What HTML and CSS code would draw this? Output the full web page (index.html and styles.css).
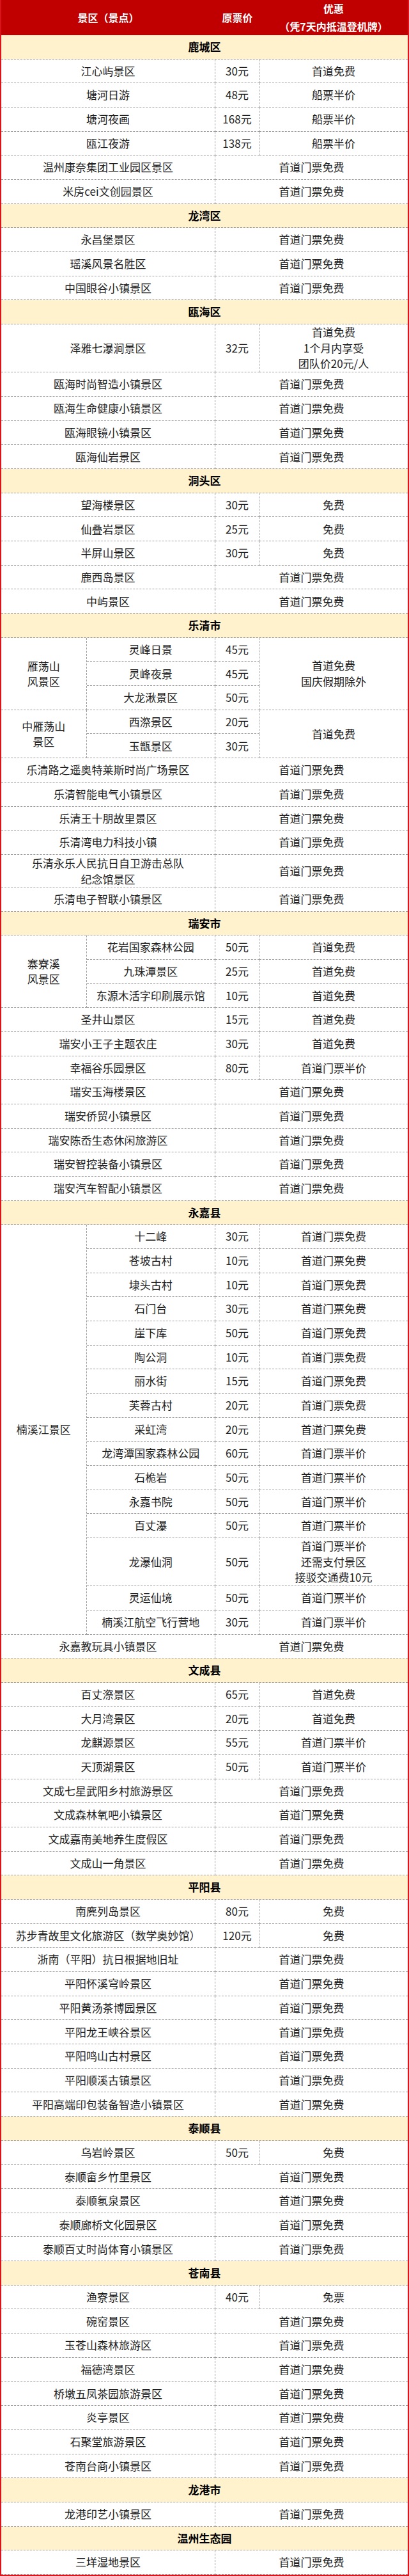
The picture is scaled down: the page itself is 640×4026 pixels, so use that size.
FILE: index.html
```html
<!DOCTYPE html>
<html lang="zh-CN">
<head>
<meta charset="utf-8">
<title>温州景区优惠</title>
<link rel="stylesheet" href="styles.css">
</head>
<body>
<div class="sheet">
  <div class="head">
    <div class="hc hn">景区（景点）</div>
    <div class="hc hp">原票价</div>
    <div class="hc hd">优惠<br>（凭7天内抵温登机牌）</div>
  </div>

  <div class="region">
    <div class="c t">鹿城区</div>
    <div class="c n">江心屿景区</div><div class="c p">30元</div><div class="c d">首道免费</div>
    <div class="c n">塘河日游</div><div class="c p">48元</div><div class="c d">船票半价</div>
    <div class="c n">塘河夜画</div><div class="c p">168元</div><div class="c d">船票半价</div>
    <div class="c n">瓯江夜游</div><div class="c p">138元</div><div class="c d">船票半价</div>
    <div class="c n">温州康奈集团工业园区景区</div><div class="c w">首道门票免费</div>
    <div class="c n">米房cei文创园景区</div><div class="c w">首道门票免费</div>
  </div>

  <div class="region">
    <div class="c t">龙湾区</div>
    <div class="c n">永昌堡景区</div><div class="c w">首道门票免费</div>
    <div class="c n">瑶溪风景名胜区</div><div class="c w">首道门票免费</div>
    <div class="c n">中国眼谷小镇景区</div><div class="c w">首道门票免费</div>
  </div>

  <div class="region">
    <div class="c t">瓯海区</div>
    <div class="c n r2">泽雅七瀑涧景区</div><div class="c p r2">32元</div><div class="c d r2">首道免费<br>1个月内享受<br>团队价20元/人</div>
    <div class="c n">瓯海时尚智造小镇景区</div><div class="c w">首道门票免费</div>
    <div class="c n">瓯海生命健康小镇景区</div><div class="c w">首道门票免费</div>
    <div class="c n">瓯海眼镜小镇景区</div><div class="c w">首道门票免费</div>
    <div class="c n">瓯海仙岩景区</div><div class="c w">首道门票免费</div>
  </div>

  <div class="region">
    <div class="c t">洞头区</div>
    <div class="c n">望海楼景区</div><div class="c p">30元</div><div class="c d">免费</div>
    <div class="c n">仙叠岩景区</div><div class="c p">25元</div><div class="c d">免费</div>
    <div class="c n">半屏山景区</div><div class="c p">30元</div><div class="c d">免费</div>
    <div class="c n">鹿西岛景区</div><div class="c w">首道门票免费</div>
    <div class="c n">中屿景区</div><div class="c w">首道门票免费</div>
  </div>

  <div class="region">
    <div class="c t">乐清市</div>
    <div class="c g r3">雁荡山<br>风景区</div><div class="c s">灵峰日景</div><div class="c p">45元</div><div class="c d r3">首道免费<br>国庆假期除外</div>
    <div class="c s">灵峰夜景</div><div class="c p">45元</div>
    <div class="c s">大龙湫景区</div><div class="c p">50元</div>
    <div class="c g r2">中雁荡山<br>景区</div><div class="c s">西漈景区</div><div class="c p">20元</div><div class="c d r2">首道免费</div>
    <div class="c s">玉甑景区</div><div class="c p">30元</div>
    <div class="c n">乐清路之遥奥特莱斯时尚广场景区</div><div class="c w">首道门票免费</div>
    <div class="c n">乐清智能电气小镇景区</div><div class="c w">首道门票免费</div>
    <div class="c n">乐清王十朋故里景区</div><div class="c w">首道门票免费</div>
    <div class="c n">乐清湾电力科技小镇</div><div class="c w">首道门票免费</div>
    <div class="c n tall">乐清永乐人民抗日自卫游击总队<br>纪念馆景区</div><div class="c w">首道门票免费</div>
    <div class="c n">乐清电子智联小镇景区</div><div class="c w">首道门票免费</div>
  </div>

  <div class="region">
    <div class="c t">瑞安市</div>
    <div class="c g r3">寨寮溪<br>风景区</div><div class="c s">花岩国家森林公园</div><div class="c p">50元</div><div class="c d">首道免费</div>
    <div class="c s">九珠潭景区</div><div class="c p">25元</div><div class="c d">首道免费</div>
    <div class="c s">东源木活字印刷展示馆</div><div class="c p">10元</div><div class="c d">首道免费</div>
    <div class="c n">圣井山景区</div><div class="c p">15元</div><div class="c d">首道免费</div>
    <div class="c n">瑞安小王子主题农庄</div><div class="c p">30元</div><div class="c d">首道免费</div>
    <div class="c n">幸福谷乐园景区</div><div class="c p">80元</div><div class="c d">首道门票半价</div>
    <div class="c n">瑞安玉海楼景区</div><div class="c w">首道门票免费</div>
    <div class="c n">瑞安侨贸小镇景区</div><div class="c w">首道门票免费</div>
    <div class="c n">瑞安陈岙生态休闲旅游区</div><div class="c w">首道门票免费</div>
    <div class="c n">瑞安智控装备小镇景区</div><div class="c w">首道门票免费</div>
    <div class="c n">瑞安汽车智配小镇景区</div><div class="c w">首道门票免费</div>
  </div>

  <div class="region">
    <div class="c t">永嘉县</div>
    <div class="c g r17">楠溪江景区</div><div class="c s">十二峰</div><div class="c p">30元</div><div class="c d">首道门票免费</div>
    <div class="c s">苍坡古村</div><div class="c p">10元</div><div class="c d">首道门票免费</div>
    <div class="c s">埭头古村</div><div class="c p">10元</div><div class="c d">首道门票免费</div>
    <div class="c s">石门台</div><div class="c p">30元</div><div class="c d">首道门票免费</div>
    <div class="c s">崖下库</div><div class="c p">50元</div><div class="c d">首道门票免费</div>
    <div class="c s">陶公洞</div><div class="c p">10元</div><div class="c d">首道门票免费</div>
    <div class="c s">丽水街</div><div class="c p">15元</div><div class="c d">首道门票免费</div>
    <div class="c s">芙蓉古村</div><div class="c p">20元</div><div class="c d">首道门票免费</div>
    <div class="c s">采虹湾</div><div class="c p">20元</div><div class="c d">首道门票免费</div>
    <div class="c s">龙湾潭国家森林公园</div><div class="c p">60元</div><div class="c d">首道门票半价</div>
    <div class="c s">石桅岩</div><div class="c p">50元</div><div class="c d">首道门票半价</div>
    <div class="c s">永嘉书院</div><div class="c p">50元</div><div class="c d">首道门票半价</div>
    <div class="c s">百丈瀑</div><div class="c p">50元</div><div class="c d">首道门票半价</div>
    <div class="c s r2">龙瀑仙洞</div><div class="c p r2">50元</div><div class="c d r2">首道门票半价<br>还需支付景区<br>接驳交通费10元</div>
    <div class="c s">灵运仙境</div><div class="c p">50元</div><div class="c d">首道门票半价</div>
    <div class="c s">楠溪江航空飞行营地</div><div class="c p">30元</div><div class="c d">首道门票半价</div>
    <div class="c n">永嘉教玩具小镇景区</div><div class="c w">首道门票免费</div>
  </div>

  <div class="region">
    <div class="c t">文成县</div>
    <div class="c n">百丈漈景区</div><div class="c p">65元</div><div class="c d">首道免费</div>
    <div class="c n">大月湾景区</div><div class="c p">20元</div><div class="c d">首道免费</div>
    <div class="c n">龙麒源景区</div><div class="c p">55元</div><div class="c d">首道门票半价</div>
    <div class="c n">天顶湖景区</div><div class="c p">50元</div><div class="c d">首道门票半价</div>
    <div class="c n">文成七星武阳乡村旅游景区</div><div class="c w">首道门票免费</div>
    <div class="c n">文成森林氧吧小镇景区</div><div class="c w">首道门票免费</div>
    <div class="c n">文成嘉南美地养生度假区</div><div class="c w">首道门票免费</div>
    <div class="c n">文成山一角景区</div><div class="c w">首道门票免费</div>
  </div>

  <div class="region">
    <div class="c t">平阳县</div>
    <div class="c n">南麂列岛景区</div><div class="c p">80元</div><div class="c d">免费</div>
    <div class="c n">苏步青故里文化旅游区（数学奥妙馆）</div><div class="c p">120元</div><div class="c d">免费</div>
    <div class="c n">浙南（平阳）抗日根据地旧址</div><div class="c w">首道门票免费</div>
    <div class="c n">平阳怀溪穹岭景区</div><div class="c w">首道门票免费</div>
    <div class="c n">平阳黄汤茶博园景区</div><div class="c w">首道门票免费</div>
    <div class="c n">平阳龙王峡谷景区</div><div class="c w">首道门票免费</div>
    <div class="c n">平阳鸣山古村景区</div><div class="c w">首道门票免费</div>
    <div class="c n">平阳顺溪古镇景区</div><div class="c w">首道门票免费</div>
    <div class="c n">平阳高端印包装备智造小镇景区</div><div class="c w">首道门票免费</div>
  </div>

  <div class="region">
    <div class="c t">泰顺县</div>
    <div class="c n">乌岩岭景区</div><div class="c p">50元</div><div class="c d">免费</div>
    <div class="c n">泰顺畲乡竹里景区</div><div class="c w">首道门票免费</div>
    <div class="c n">泰顺氡泉景区</div><div class="c w">首道门票免费</div>
    <div class="c n">泰顺廊桥文化园景区</div><div class="c w">首道门票免费</div>
    <div class="c n">泰顺百丈时尚体育小镇景区</div><div class="c w">首道门票免费</div>
  </div>

  <div class="region">
    <div class="c t">苍南县</div>
    <div class="c n">渔寮景区</div><div class="c p">40元</div><div class="c d">免票</div>
    <div class="c n">碗窑景区</div><div class="c w">首道门票免费</div>
    <div class="c n">玉苍山森林旅游区</div><div class="c w">首道门票免费</div>
    <div class="c n">福德湾景区</div><div class="c w">首道门票免费</div>
    <div class="c n">桥墩五凤茶园旅游景区</div><div class="c w">首道门票免费</div>
    <div class="c n">炎亭景区</div><div class="c w">首道门票免费</div>
    <div class="c n">石聚堂旅游景区</div><div class="c w">首道门票免费</div>
    <div class="c n">苍南台商小镇景区</div><div class="c w">首道门票免费</div>
  </div>

  <div class="region">
    <div class="c t">龙港市</div>
    <div class="c n">龙港印艺小镇景区</div><div class="c w">首道门票免费</div>
  </div>

  <div class="region last">
    <div class="c t">温州生态园</div>
    <div class="c n">三垟湿地景区</div><div class="c w">首道门票免费</div>
  </div>
</div>
</body>
</html>
```

FILE: styles.css
```css
html, body {
  margin: 0;
  padding: 0;
  background: #ffffff;
}

body {
  font-family: "Noto Sans CJK SC", "Microsoft YaHei", "Noto Sans", sans-serif;
  font-size: 17px;
  color: #1e1e1e;
}

.sheet {
  width: 640px;
  box-sizing: border-box;
  border-left: 2px solid #d9141b;
  border-right: 2px solid #d9141b;
  border-bottom: 2px solid #d9141b;
}

.head,
.region {
  display: grid;
  grid-template-columns: 133.5px 201.5px 69px 1fr;
}

.head {
  height: 55px;
  background: #c00000;
  color: #ffffff;
  font-weight: 700;
  font-size: 16px;
  line-height: 27.5px;
}

.hc {
  display: flex;
  align-items: center;
  justify-content: center;
  text-align: center;
  white-space: nowrap;
}

.hn { grid-column: 1 / 3; }
.hp { grid-column: 3; }
.hd { grid-column: 4; }

.region {
  grid-auto-rows: minmax(37.68px, auto);
}

.c {
  display: flex;
  align-items: center;
  justify-content: center;
  text-align: center;
  white-space: nowrap;
  box-sizing: border-box;
  line-height: 24.5px;
  border-bottom: 1px dashed #9c9c9c;
}

.t {
  grid-column: 1 / -1;
  background: #fff2cc;
  font-weight: 700;
  color: #000000;
}

.n {
  grid-column: 1 / 3;
  border-right: 1px dashed #9c9c9c;
}

.g {
  grid-column: 1;
  border-right: 1px dashed #9c9c9c;
  line-height: 24px;
}

.s {
  grid-column: 2;
  border-right: 1px dashed #9c9c9c;
}

.p {
  grid-column: 3;
  border-right: 1px dashed #9c9c9c;
}

.d { grid-column: 4; }

.w { grid-column: 3 / 5; }

.r2 { grid-row: span 2; }
.r3 { grid-row: span 3; }
.r17 { grid-row: span 17; }

.tall {
  line-height: 25px;
  min-height: 50px;
}
```
